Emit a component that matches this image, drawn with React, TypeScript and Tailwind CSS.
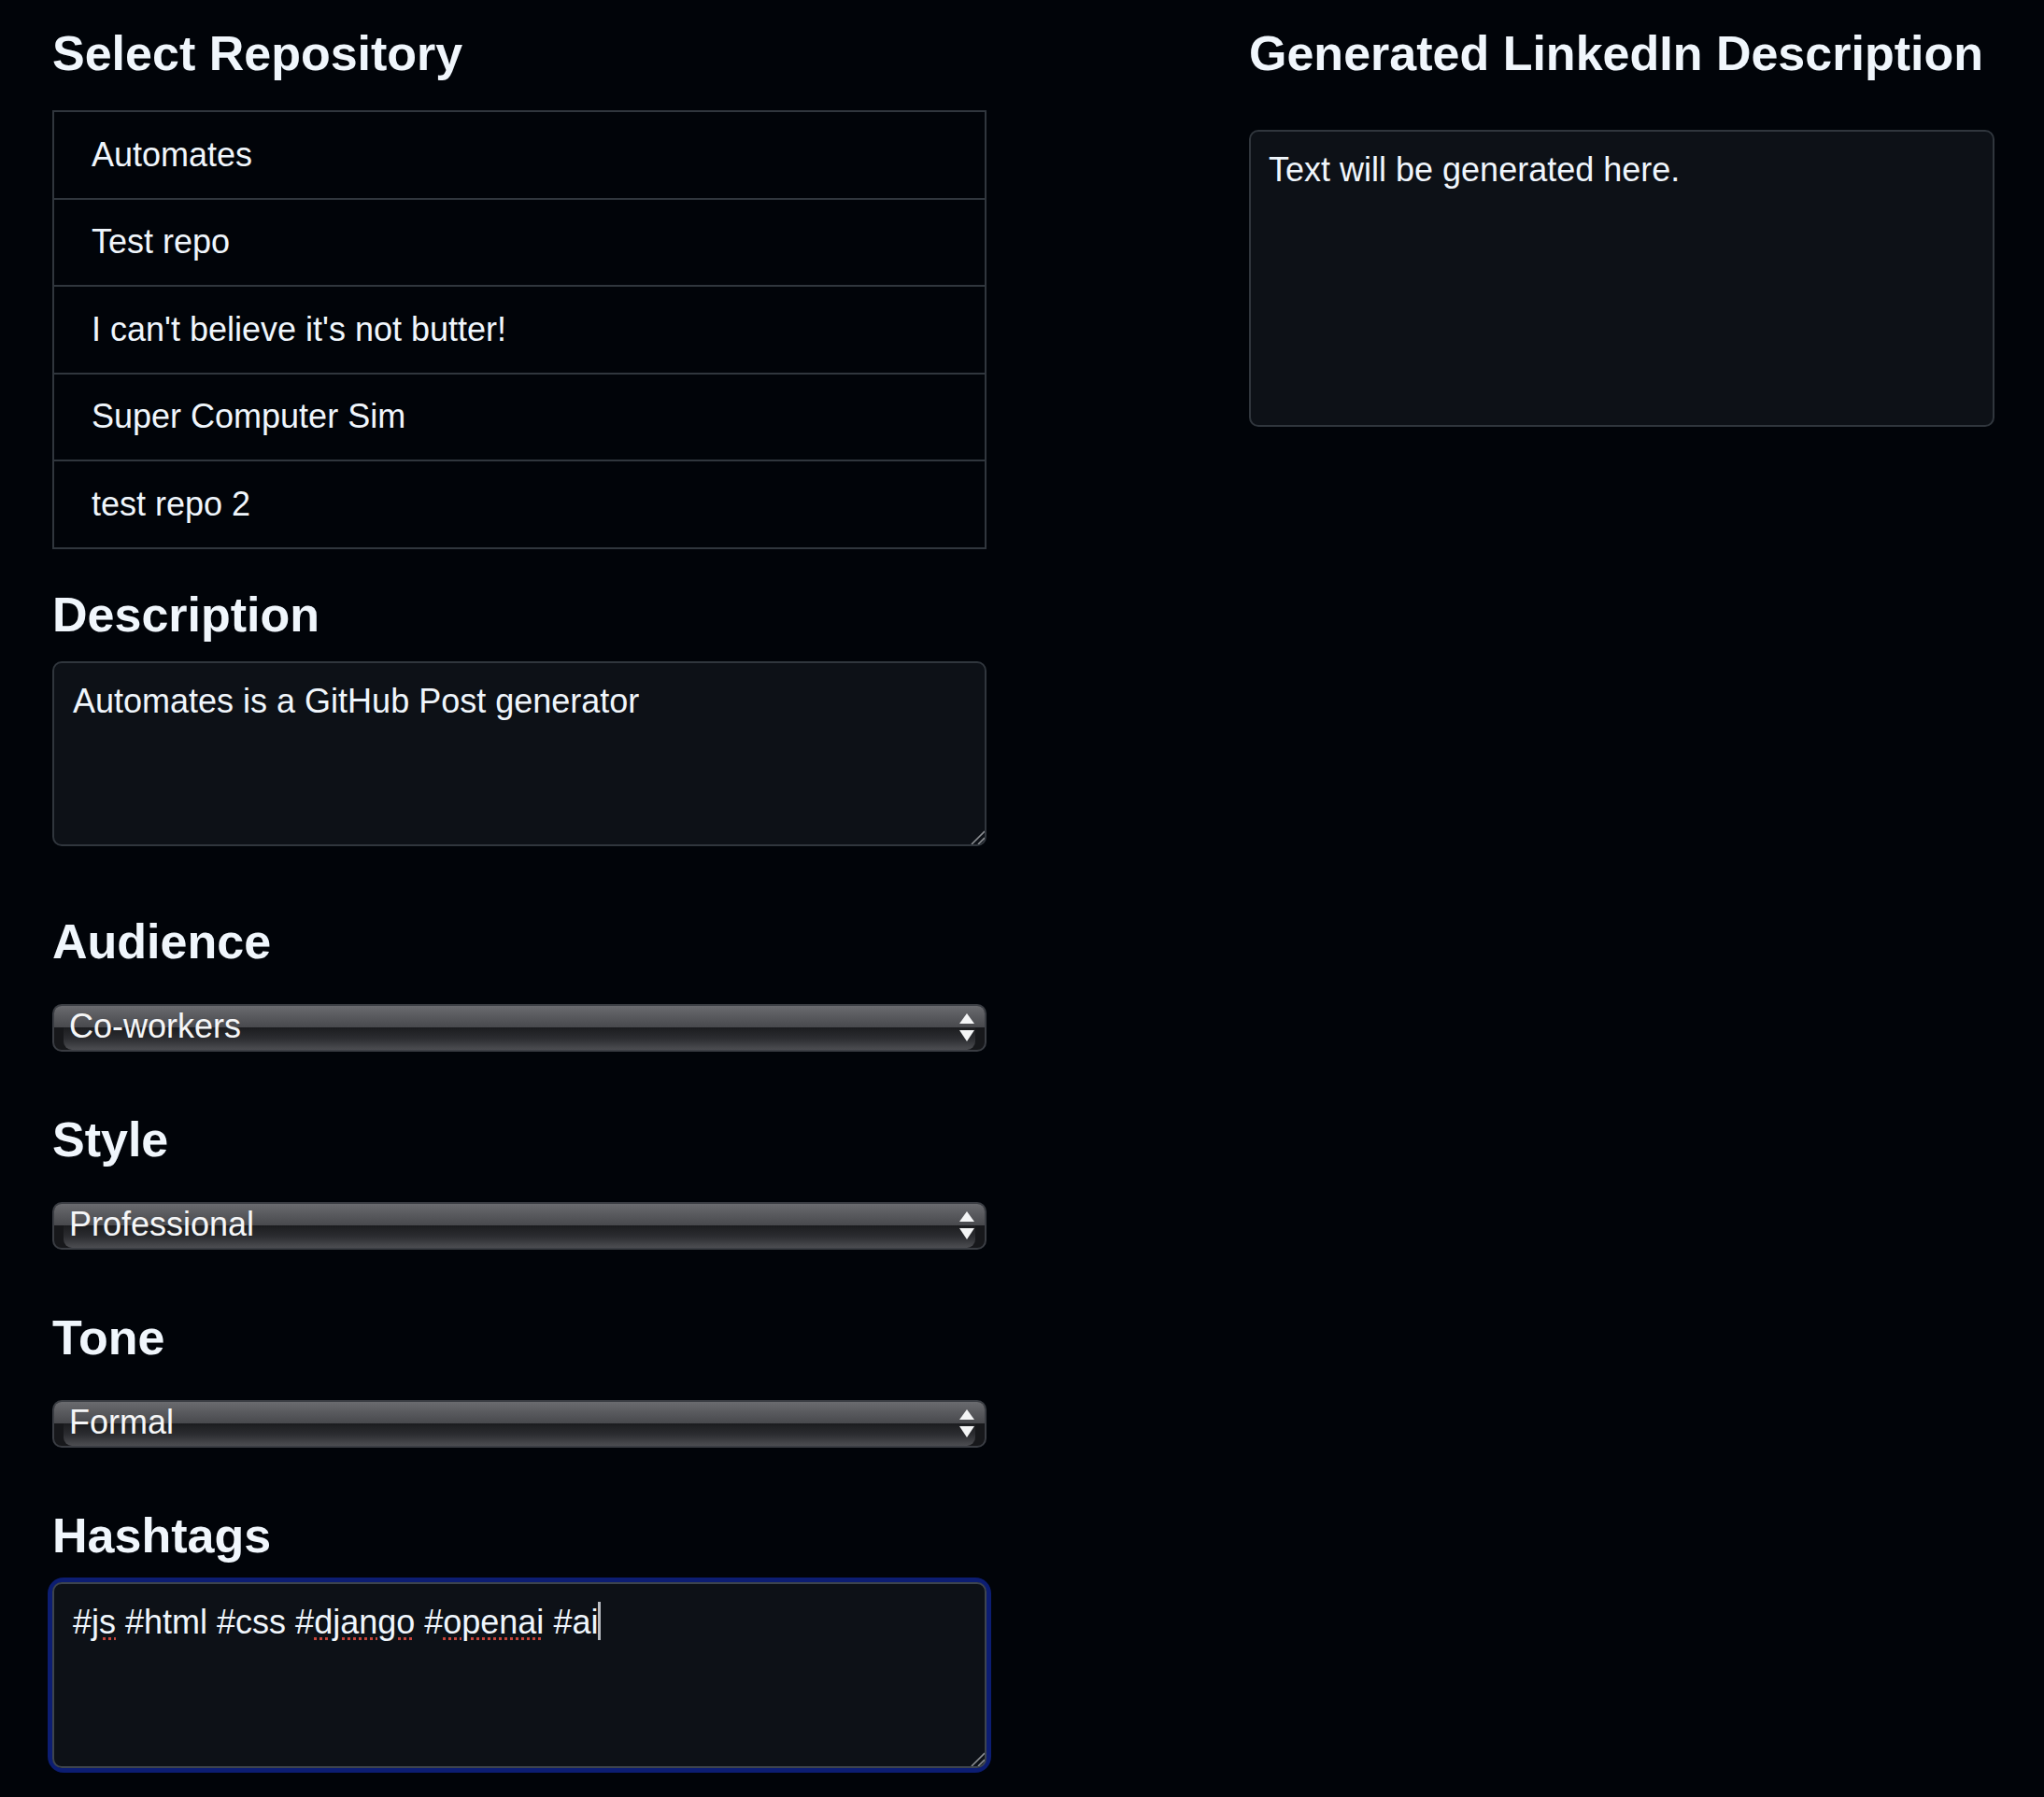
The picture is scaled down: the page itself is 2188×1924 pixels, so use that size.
import React from 'react';

const repositories = [
  'Automates',
  'Test repo',
  "I can't believe it's not butter!",
  'Super Computer Sim',
  'test repo 2',
];

const Heading: React.FC<{ children: React.ReactNode; className?: string }> = ({ children, className = '' }) => (
  <h2 className={`text-[52px] leading-[60px] font-bold text-[#f0f6fc] ${className}`}>{children}</h2>
);

// little diagonal grip that the browser draws in the corner of a textarea
const ResizeGrip: React.FC = () => (
  <svg
    width="16"
    height="16"
    viewBox="0 0 16 16"
    className="col-start-1 row-start-1 self-end justify-self-end mr-[2px] mb-[2px] pointer-events-none"
  >
    <line x1="2" y1="16" x2="16" y2="2" stroke="#8b8e93" strokeWidth="1.6" />
    <line x1="9" y1="16" x2="16" y2="9" stroke="#8b8e93" strokeWidth="1.6" />
  </svg>
);

const GlossySelect: React.FC<{ value: string; className?: string }> = ({ value, className = '' }) => (
  <div
    className={`grid h-[51px] rounded-[10px] border-2 border-[#3a3d43] bg-[#17181b] overflow-hidden ${className}`}
  >
    {/* aqua style background: light top half, inset darker bottom half */}
    <div className="col-start-1 row-start-1 flex flex-col">
      <div className="h-1/2 bg-gradient-to-b from-[#6a6b6f] to-[#48494d]" />
      <div className="h-1/2 mx-[10px] rounded-b-[9px] bg-gradient-to-b from-[#1b1c1f] via-[#2c2d31] to-[#4d4e52]" />
    </div>
    <div className="col-start-1 row-start-1 flex items-center justify-between pl-[16px] pr-[11px]">
      <span className="text-[36px] leading-none text-[#f5f6f7] pb-[2px]">{value}</span>
      <svg width="16" height="30" viewBox="0 0 16 30">
        <polygon points="8,0 16,11 0,11" fill="#f4f5f6" />
        <polygon points="0,18 16,18 8,30" fill="#f4f5f6" />
      </svg>
    </div>
  </div>
);

const SpellMark: React.FC<{ children: React.ReactNode }> = ({ children }) => (
  <span className="underline decoration-dotted decoration-[#c8453a] decoration-3 underline-offset-4">
    {children}
  </span>
);

const App: React.FC = () => {
  return (
    <div className="min-h-screen bg-[#010409] text-[#f0f6fc] font-['Liberation_Sans',Arial,sans-serif]">
      <div className="flex gap-[281px] pl-[56px] pt-[27px] pb-[24px]">
        {/* Left column: form */}
        <div className="w-[1000px] flex flex-col">
          <Heading>Select Repository</Heading>
          <ul className="mt-[31px] border-2 border-[#30363d]">
            {repositories.map((repo, i) => {
              const last = i === repositories.length - 1;
              return (
                <li
                  key={repo}
                  className={`flex items-center pl-[40px] text-[36px] leading-[54px] ${
                    last ? 'h-[91.5px]' : 'h-[93.5px] border-b-2 border-[#30363d]'
                  }`}
                >
                  {repo}
                </li>
              );
            })}
          </ul>

          <Heading className="mt-[40px]">Description</Heading>
          <div className="grid mt-[20px]">
            <textarea
              className="col-start-1 row-start-1 h-[198px] w-full resize-none rounded-[10px] border-2 border-[#30363d] bg-[#0d1117] px-[20px] py-[14px] text-[36px] leading-[54px] text-[#f0f6fc] outline-none"
              defaultValue="Automates is a GitHub Post generator"
            />
            <ResizeGrip />
          </div>

          <Heading className="mt-[72px]">Audience</Heading>
          <GlossySelect value="Co-workers" className="mt-[37px]" />

          <Heading className="mt-[64px]">Style</Heading>
          <GlossySelect value="Professional" className="mt-[37px]" />

          <Heading className="mt-[64px]">Tone</Heading>
          <GlossySelect value="Formal" className="mt-[37px]" />

          <Heading className="mt-[64px]">Hashtags</Heading>
          <div className="grid mt-[20px] rounded-[12px] shadow-[0_0_0_5px_#0c1d72]">
            <div className="col-start-1 row-start-1 h-[199px] rounded-[10px] border-2 border-[#3d444d] bg-[#0d1117] px-[20px] py-[14px] text-[36px] leading-[54px] text-[#f0f6fc]">
              #<SpellMark>js</SpellMark> #html #css #<SpellMark>django</SpellMark> #<SpellMark>openai</SpellMark> #ai
              <span className="inline-block w-[3px] h-[41px] bg-[#b9bdc3] align-[-7px]" />
            </div>
            <ResizeGrip />
          </div>
        </div>

        {/* Right column: output */}
        <div className="w-[798px] flex flex-col">
          <Heading>Generated LinkedIn Description</Heading>
          <div className="mt-[52px] h-[318px] rounded-[10px] border-2 border-[#30363d] bg-[#0d1117] px-[19px] py-[14px] text-[36px] leading-[54px] text-[#f0f6fc]">
            Text will be generated here.
          </div>
        </div>
      </div>
    </div>
  );
};

export default App;
